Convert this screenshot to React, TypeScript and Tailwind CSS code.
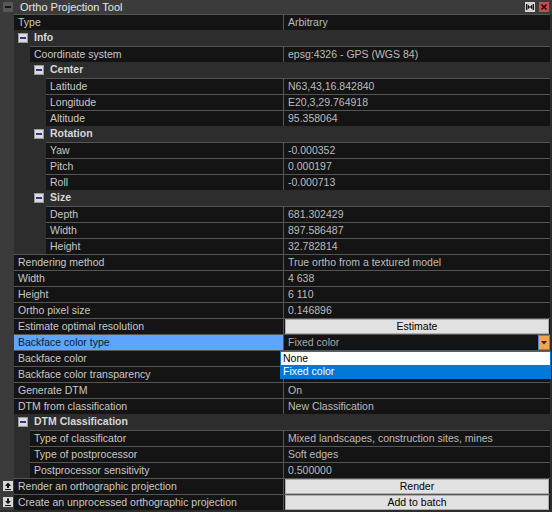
import React from "react";

type Row =
  | { t: "cat"; d: number; name: string }
  | {
      t: "item";
      d: number;
      name: string;
      value?: string;
      button?: string;
      select?: string;
      selected?: boolean;
      side?: "up" | "down";
    };

const rows: Row[] = [
  { t: "item", d: 0, name: "Type", value: "Arbitrary" },
  { t: "cat", d: 0, name: "Info" },
  { t: "item", d: 1, name: "Coordinate system", value: "epsg:4326 - GPS (WGS 84)" },
  { t: "cat", d: 1, name: "Center" },
  { t: "item", d: 2, name: "Latitude", value: "N63,43,16.842840" },
  { t: "item", d: 2, name: "Longitude", value: "E20,3,29.764918" },
  { t: "item", d: 2, name: "Altitude", value: "95.358064" },
  { t: "cat", d: 1, name: "Rotation" },
  { t: "item", d: 2, name: "Yaw", value: "-0.000352" },
  { t: "item", d: 2, name: "Pitch", value: "0.000197" },
  { t: "item", d: 2, name: "Roll", value: "-0.000713" },
  { t: "cat", d: 1, name: "Size" },
  { t: "item", d: 2, name: "Depth", value: "681.302429" },
  { t: "item", d: 2, name: "Width", value: "897.586487" },
  { t: "item", d: 2, name: "Height", value: "32.782814" },
  { t: "item", d: 0, name: "Rendering method", value: "True ortho from a textured model" },
  { t: "item", d: 0, name: "Width", value: "4 638" },
  { t: "item", d: 0, name: "Height", value: "6 110" },
  { t: "item", d: 0, name: "Ortho pixel size", value: "0.146896" },
  { t: "item", d: 0, name: "Estimate optimal resolution", button: "Estimate" },
  { t: "item", d: 0, name: "Backface color type", select: "Fixed color", selected: true },
  { t: "item", d: 0, name: "Backface color", value: "" },
  { t: "item", d: 0, name: "Backface color transparency", value: "" },
  { t: "item", d: 0, name: "Generate DTM", value: "On" },
  { t: "item", d: 0, name: "DTM from classification", value: "New Classification" },
  { t: "cat", d: 0, name: "DTM Classification" },
  { t: "item", d: 1, name: "Type of classificator", value: "Mixed landscapes, construction sites, mines" },
  { t: "item", d: 1, name: "Type of postprocessor", value: "Soft edges" },
  { t: "item", d: 1, name: "Postprocessor sensitivity", value: "0.500000" },
  { t: "item", d: 0, name: "Render an orthographic projection", button: "Render", side: "up" },
  { t: "item", d: 0, name: "Create an unprocessed orthographic projection", button: "Add to batch", side: "down" },
];

const indent = ["w-0", "w-[16px]", "w-[32px]"];

function Expander() {
  return (
    <svg width="10" height="10" viewBox="0 0 10 10" className="shrink-0">
      <rect x="0.5" y="0.5" width="9" height="9" fill="#dcdcdc" stroke="#9a9a9a" />
      <rect x="2" y="4" width="6" height="2" fill="#23408a" />
    </svg>
  );
}

function SideIcon({ dir }: { dir: "up" | "down" }) {
  return (
    <svg width="10" height="10" viewBox="0 0 10 10">
      <rect x="0" y="0" width="10" height="10" fill="#d6d6d6" />
      {dir === "up" ? (
        <path d="M5 1.5 L8 5 L6 5 L6 7 L4 7 L4 5 L2 5 Z" fill="#111" />
      ) : (
        <path d="M4 1.5 L6 1.5 L6 4 L8 4 L5 7 L2 4 L4 4 Z" fill="#111" />
      )}
      <rect x="2" y="8" width="6" height="1" fill="#111" />
    </svg>
  );
}

function ItemRow({ r }: { r: Extract<Row, { t: "item" }> }) {
  return (
    <div className="flex flex-1 border-t border-[#555555] bg-[#141414] min-w-0">
      <div
        className={
          r.selected
            ? "flex-1 min-w-0 truncate pl-1 leading-[15px] bg-[#5ea5ff] text-[#111a2a]"
            : "flex-1 min-w-0 truncate pl-1 leading-[15px] text-[#c8c8c8]"
        }
      >
        {r.name}
      </div>
      <div className="w-[267px] shrink-0 border-l border-[#555555] flex">
        {r.button ? (
          <div className="flex-1 mx-px border border-[#adadad] bg-[#e1e1e1] text-black text-center leading-[13px]">
            {r.button}
          </div>
        ) : r.select ? (
          <div className="flex flex-1">
            <div className="flex-1 pl-1 leading-[15px] text-[#a8a8a8]">{r.select}</div>
            <div className="w-[12px] border border-[#4f86d6] bg-[#f6a24e] flex items-center justify-center">
              <svg width="6" height="4" viewBox="0 0 6 4">
                <path d="M0 0 L6 0 L3 3.5 Z" fill="#2a2a2a" />
              </svg>
            </div>
          </div>
        ) : (
          <div className="flex-1 pl-1 leading-[15px] text-[#bcbcbc] truncate">{r.value}</div>
        )}
      </div>
    </div>
  );
}

export default function App() {
  return (
    <div
      className="relative w-[552px] h-[512px] overflow-hidden bg-[#2d2d2d] text-[10.5px] select-none"
      style={{ fontFamily: '"Liberation Sans", Arial, sans-serif' }}
    >
      {/* Title bar */}
      <div className="flex h-[14px] items-center bg-[#3b3b3b] pl-[3px] pr-[3px]">
        <svg width="10" height="10" viewBox="0 0 10 10" className="shrink-0">
          <rect x="0" y="0" width="10" height="10" fill="#575757" />
          <rect x="2" y="4" width="6" height="2" fill="#151515" />
        </svg>
        <div className="ml-[7px] flex-1 text-[11px] leading-[14px] text-[#e6e6e6]">Ortho Projection Tool</div>
        <svg width="10" height="10" viewBox="0 0 10 10" className="shrink-0">
          <rect x="0" y="0" width="10" height="10" fill="#d4d4d4" />
          <rect x="1" y="2" width="1" height="6" fill="#111" />
          <rect x="8" y="2" width="1" height="6" fill="#111" />
          <path d="M2.5 2 L5 5 L2.5 8 Z M7.5 2 L5 5 L7.5 8 Z" fill="#111" />
        </svg>
        <svg width="10" height="10" viewBox="0 0 10 10" className="ml-[4px] shrink-0">
          <rect x="0" y="0" width="10" height="10" fill="#c84c4c" />
          <path d="M2.5 2.5 L7.5 7.5 M7.5 2.5 L2.5 7.5" stroke="#1a0606" strokeWidth="1.6" />
        </svg>
      </div>

      {/* Property grid */}
      <div className="flex flex-col">
        {rows.map((r, i) => (
          <div key={i} className="flex h-[16px]">
            <div className="w-[14px] shrink-0 bg-[#3b3b3b] flex items-center pl-[3px]">
              {r.t === "item" && r.side ? <SideIcon dir={r.side} /> : null}
            </div>
            <div className="flex flex-1 pr-[2px] min-w-0">
              <div className={indent[r.d] + " shrink-0"} />
              {r.t === "cat" ? (
                <div className="flex flex-1 items-center pl-1">
                  <Expander />
                  <span className="ml-[6px] font-bold text-[#d8d8d8]">{r.name}</span>
                </div>
              ) : (
                <ItemRow r={r} />
              )}
            </div>
          </div>
        ))}
      </div>

      {/* Open dropdown list */}
      <div className="absolute left-[280px] top-[351px] w-[271px] border border-[#0078d7] bg-white">
        <div className="h-[13px] pl-[2px] leading-[13px] text-black">None</div>
        <div className="h-[13px] pl-[2px] leading-[13px] bg-[#0078d7] text-white">Fixed color</div>
      </div>
    </div>
  );
}
